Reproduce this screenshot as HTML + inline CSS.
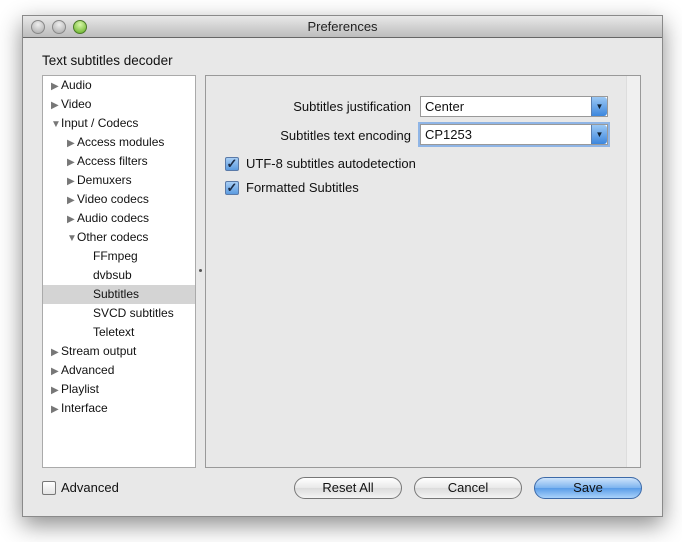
<!DOCTYPE html>
<html><head><style>
*{margin:0;padding:0;box-sizing:border-box}
body{width:682px;height:542px;background:#fff;font-family:"Liberation Sans",sans-serif;font-size:13px;color:#111;position:relative;overflow:hidden}
.win{position:absolute;left:22px;top:15px;width:641px;height:502px;background:#e8e8e8;border:1px solid #8a8a8a;box-shadow:0 8px 22px rgba(0,0,0,.45)}
.tb{position:absolute;left:0;top:0;width:100%;height:22px;background:linear-gradient(#e8e8e8,#bdbdbd);border-bottom:1px solid #666;text-align:center;line-height:22px;font-size:13px;color:#222}
.dot{position:absolute;top:4px;width:14px;height:14px;border-radius:50%;background:radial-gradient(circle at 50% 30%,#eee,#a8a8a8);border:1px solid #888}
.abs{position:absolute}
.tree{left:19px;top:59px;width:154px;height:393px;background:#fff;border:1px solid #aaa}
.row{position:absolute;left:0;width:152px;height:19px;line-height:19px;font-size:12px}
.tri{display:inline-block;width:10px;color:#777;font-size:10px}
.panel{left:182px;top:59px;width:436px;height:393px;border:1px solid #999;background:#e8e8e8}
.combo{position:absolute;height:21px;background:#fff;border:1px solid #999;line-height:19px;padding-left:4px;font-size:13px}
.arr{position:absolute;right:0;top:0;width:16px;height:19px;background:linear-gradient(#9cc8f4,#3c86dd);border-left:1px solid #5a7fb0;border-radius:0 3px 3px 0;color:#123;font-size:8px;text-align:center;line-height:19px}
.cb{position:absolute;width:14px;height:14px;border:1px solid #5a7aa8;border-radius:2px;background:linear-gradient(#a8cef5,#5b9be0);color:#1b2b45;font-size:13px;line-height:12px;text-align:center;font-weight:bold}
.btn{position:absolute;top:461px;width:108px;height:22px;border:1px solid #777;border-radius:11px;background:linear-gradient(#fff,#e8e8e8 50%,#dcdcdc 51%,#f4f4f4);text-align:center;line-height:20px;font-size:13px}
</style></head><body>
<div class="win">
<div class="tb">Preferences
<div class="dot" style="left:8px"></div><div class="dot" style="left:29px"></div>
<div class="dot" style="left:50px;background:radial-gradient(circle at 50% 30%,#d8f7a8,#5fae1f);border-color:#4c7a2a"></div></div>
<div class="abs" style="left:19px;top:37px;font-size:13.5px">Text subtitles decoder</div>
<div class="abs tree">
<div class="row" style="top:0"><span style="padding-left:8px"></span><span class="tri">▶</span>Audio</div>
<div class="row" style="top:19px"><span style="padding-left:8px"></span><span class="tri">▶</span>Video</div>
<div class="row" style="top:38px"><span style="padding-left:8px"></span><span class="tri">▼</span>Input / Codecs</div>
<div class="row" style="top:57px"><span style="padding-left:24px"></span><span class="tri">▶</span>Access modules</div>
<div class="row" style="top:76px"><span style="padding-left:24px"></span><span class="tri">▶</span>Access filters</div>
<div class="row" style="top:95px"><span style="padding-left:24px"></span><span class="tri">▶</span>Demuxers</div>
<div class="row" style="top:114px"><span style="padding-left:24px"></span><span class="tri">▶</span>Video codecs</div>
<div class="row" style="top:133px"><span style="padding-left:24px"></span><span class="tri">▶</span>Audio codecs</div>
<div class="row" style="top:152px"><span style="padding-left:24px"></span><span class="tri">▼</span>Other codecs</div>
<div class="row" style="top:171px;padding-left:50px">FFmpeg</div>
<div class="row" style="top:190px;padding-left:50px">dvbsub</div>
<div class="row" style="top:209px;padding-left:50px;background:#d4d4d4">Subtitles</div>
<div class="row" style="top:228px;padding-left:50px">SVCD subtitles</div>
<div class="row" style="top:247px;padding-left:50px">Teletext</div>
<div class="row" style="top:266px"><span style="padding-left:8px"></span><span class="tri">▶</span>Stream output</div>
<div class="row" style="top:285px"><span style="padding-left:8px"></span><span class="tri">▶</span>Advanced</div>
<div class="row" style="top:304px"><span style="padding-left:8px"></span><span class="tri">▶</span>Playlist</div>
<div class="row" style="top:323px"><span style="padding-left:8px"></span><span class="tri">▶</span>Interface</div>
</div>
<div class="abs" style="left:176px;top:253px;width:3px;height:3px;background:#555;border-radius:50%"></div>
<div class="abs panel">
<div class="abs" style="right:0;top:0;width:14px;height:391px;background:#f0f0f0;border-left:1px solid #ddd"></div>
<div class="abs" style="right:229px;top:23px;white-space:nowrap">Subtitles justification</div>
<div class="combo" style="left:214px;top:20px;width:188px">Center<div class="arr">▼</div></div>
<div class="abs" style="right:229px;top:52px;white-space:nowrap">Subtitles text encoding</div>
<div class="combo" style="left:214px;top:48px;width:188px;box-shadow:0 0 0 2px #8fb5e6">CP1253<div class="arr">▼</div></div>
<div class="cb" style="left:19px;top:81px">✓</div>
<div class="abs" style="left:40px;top:80px">UTF-8 subtitles autodetection</div>
<div class="cb" style="left:19px;top:105px">✓</div>
<div class="abs" style="left:40px;top:104px">Formatted Subtitles</div>
</div>
<div class="abs" style="left:19px;top:465px;width:14px;height:14px;border:1px solid #777;border-radius:2px;background:linear-gradient(#fff,#e4e4e4)"></div>
<div class="abs" style="left:38px;top:464px">Advanced</div>
<div class="btn" style="left:271px">Reset All</div>
<div class="btn" style="left:391px">Cancel</div>
<div class="btn" style="left:511px;border-color:#3d6aa8;background:linear-gradient(#cfe4fb,#7db4ef 50%,#5a9ce8 51%,#a9d2fb)">Save</div>
</div>
</body></html>
